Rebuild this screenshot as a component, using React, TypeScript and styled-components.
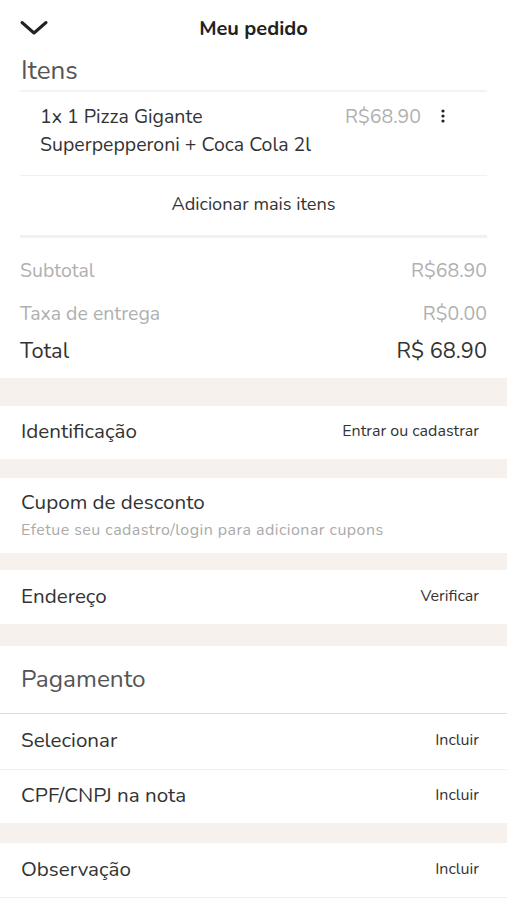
import React from "react";
import styled, { createGlobalStyle } from "styled-components";

const Global = createGlobalStyle`
  html, body { margin: 0; padding: 0; background: #fff; }
  body { font-family: "Nunito", Lato, "Open Sans", sans-serif; color: #333; }
  * { box-sizing: border-box; }
`;

const Page = styled.div`
  width: 507px;
  background: #fff;
`;

const Header = styled.header`
  height: 56px;
  display: grid;
  grid-template-columns: 60px 1fr 60px;
  align-items: center;
  padding: 0 20px;
`;

const Back = styled.button`
  border: 0;
  background: none;
  padding: 0;
  width: 28px;
  height: 20px;
  display: flex;
  align-items: center;
  color: #222;
`;

const Title = styled.h1`
  margin: 0;
  text-align: center;
  font-size: 20px;
  font-weight: 700;
  color: #222;
`;

const Inset = styled.div`
  padding: 0 20px;
`;

const SectionTitle = styled.div<{ $h: number }>`
  height: ${(p) => p.$h}px;
  display: flex;
  align-items: center;
  font-size: 26px;
  color: #555;
  padding: 0 1px 6px;
`;

const Rule = styled.div<{ $w?: number; $c?: string }>`
  height: ${(p) => p.$w ?? 1}px;
  background: ${(p) => p.$c ?? "#efefef"};
`;

const ItemRow = styled.div`
  height: 83px;
  display: grid;
  grid-template-columns: 1fr auto 44px;
  align-items: start;
  padding: 11px 22px 0 20px;
`;

const ItemName = styled.div`
  font-size: 19.5px;
  line-height: 28px;
  color: #333;
`;

const ItemPrice = styled.div`
  font-size: 19.5px;
  line-height: 28px;
  color: #b0b0b0;
`;

const Kebab = styled.div`
  display: flex;
  justify-content: center;
  padding-top: 6px;
`;

const AddMore = styled.div`
  height: 59px;
  display: flex;
  align-items: center;
  justify-content: center;
  padding-bottom: 3px;
  font-size: 18.2px;
  color: #333;
`;

const Summary = styled.div`
  padding: 15px 20px 15px;
  display: flex;
  flex-direction: column;
`;

const SumLine = styled.div<{ $h: number; $strong?: boolean }>`
  height: ${(p) => p.$h}px;
  display: flex;
  align-items: center;
  justify-content: space-between;
  font-size: ${(p) => (p.$strong ? 21.8 : 19.5)}px;
  color: ${(p) => (p.$strong ? "#333" : "#b0b0b0")};
`;

const Band = styled.div<{ $h: number }>`
  height: ${(p) => p.$h}px;
  background: #f7f1ed;
`;

const Row = styled.div<{ $h: number; $line?: string }>`
  height: ${(p) => p.$h}px;
  display: flex;
  align-items: center;
  justify-content: space-between;
  padding: 0 28px 3px 21px;
  border-bottom: ${(p) => (p.$line ? `1px solid ${p.$line}` : "none")};
`;

const RowLabel = styled.div`
  font-size: 20.6px;
  color: #333;
`;

const RowAction = styled.div`
  font-size: 16px;
  color: #333;
`;

const Stack = styled.div`
  display: flex;
  flex-direction: column;
  gap: 3px;
`;

const Hint = styled.div`
  font-size: 16px;
  letter-spacing: 0.45px;
  color: #aaa;
`;

const PayTitle = styled.div`
  height: 68px;
  display: flex;
  align-items: center;
  padding: 0 21px 2px;
  font-size: 24.4px;
  color: #555;
  border-bottom: 1px solid #ddd;
`;

export default function App() {
  return (
    <Page>
      <Global />
      <Header>
        <Back aria-label="Fechar">
          <svg width="28" height="16" viewBox="0 0 28 16" fill="none">
            <path d="M2 2.5 L14 13 L26 2.5" stroke="#222" strokeWidth="3" strokeLinecap="round" strokeLinejoin="round" />
          </svg>
        </Back>
        <Title>Meu pedido</Title>
        <span />
      </Header>
      <Inset>
        <SectionTitle $h={34}>Itens</SectionTitle>
        <Rule $w={2} $c="#f3f3f3" />
        <ItemRow>
          <ItemName>1x 1 Pizza Gigante<br />Superpepperoni + Coca Cola 2l</ItemName>
          <ItemPrice>R$68.90</ItemPrice>
          <Kebab>
            <svg width="4" height="14" viewBox="0 0 4 14">
              <circle cx="2" cy="2" r="1.6" fill="#222" />
              <circle cx="2" cy="7" r="1.6" fill="#222" />
              <circle cx="2" cy="12" r="1.6" fill="#222" />
            </svg>
          </Kebab>
        </ItemRow>
        <Rule $w={1} $c="#f0f0f0" />
        <AddMore>Adicionar mais itens</AddMore>
        <Rule $w={3} $c="#f1f1f1" />
      </Inset>
      <Summary>
        <SumLine $h={34}><span>Subtotal</span><span>R$68.90</span></SumLine>
        <SumLine $h={52}><span>Taxa de entrega</span><span>R$0.00</span></SumLine>
        <SumLine $h={24} $strong><span>Total</span><span>R$ 68.90</span></SumLine>
      </Summary>
      <Band $h={28} />
      <Row $h={53}>
        <RowLabel>Identificação</RowLabel>
        <RowAction>Entrar ou cadastrar</RowAction>
      </Row>
      <Band $h={19} />
      <Row $h={75}>
        <Stack>
          <RowLabel>Cupom de desconto</RowLabel>
          <Hint>Efetue seu cadastro/login para adicionar cupons</Hint>
        </Stack>
      </Row>
      <Band $h={17} />
      <Row $h={54}>
        <RowLabel>Endereço</RowLabel>
        <RowAction>Verificar</RowAction>
      </Row>
      <Band $h={22} />
      <PayTitle>Pagamento</PayTitle>
      <Row $h={56} $line="#f0f0f0">
        <RowLabel>Selecionar</RowLabel>
        <RowAction>Incluir</RowAction>
      </Row>
      <Row $h={53}>
        <RowLabel>CPF/CNPJ na nota</RowLabel>
        <RowAction>Incluir</RowAction>
      </Row>
      <Band $h={20} />
      <Row $h={55} $line="#eeeeee">
        <RowLabel>Observação</RowLabel>
        <RowAction>Incluir</RowAction>
      </Row>
    </Page>
  );
}
